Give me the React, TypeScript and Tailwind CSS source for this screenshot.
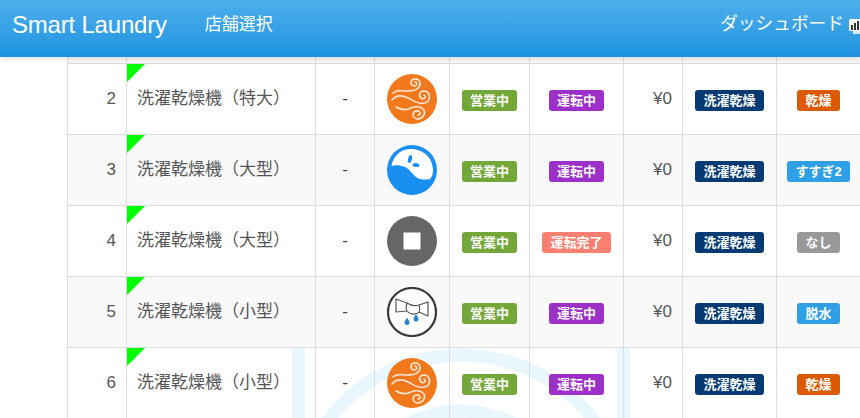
const FONT = "font-['Liberation_Sans','Noto_Sans_CJK_JP',sans-serif]";

function Wind() {
  return (
    <svg width="50" height="50" viewBox="0 0 50 50" className="block mx-auto">
      <circle cx="25" cy="25" r="25" fill="#f2781c" />
      <g fill="none" stroke="#fbe6d2" strokeWidth="1.6" strokeLinecap="round">
        <path d="M6 19C10 15 14 17 18 17C24 17 29 17 32 13C35 9 32 4 27 5C23 6 23 11 27 12C30 12 31 9 28 8" />
        <path d="M5 26C9 21 15 21 21 24C26 26 31 31 38 29C44 27 44 19 38 17C33 16 31 21 34 24C37 26 40 23 37 21" />
        <path d="M9 33C14 36 20 36 24 34C28 32 34 32 37 36C39 41 35 45 30 45C25 44 25 38 29 37C33 36 35 41 31 41" />
      </g>
    </svg>
  );
}

function Rinse() {
  return (
    <svg width="50" height="50" viewBox="0 0 50 50" className="block mx-auto">
      <circle cx="25" cy="25" r="25" fill="#1a8ff2" />
      <path d="M4.5 21C6 12 12 5 22 4C36 3 46 13 46 25C46 29 45 32 43 34C38 35 33 35 29 32C25 29 23 24 18 22C13 20 8 20 4.5 21Z" fill="#fff" />
      <ellipse cx="23" cy="14" rx="2" ry="4" fill="#1a8ff2" transform="rotate(15 23 14)" />
      <ellipse cx="29" cy="20" rx="3.5" ry="2" fill="#1a8ff2" transform="rotate(10 29 20)" />
    </svg>
  );
}

function Stop() {
  return (
    <svg width="50" height="50" viewBox="0 0 50 50" className="block mx-auto">
      <circle cx="25" cy="25" r="25" fill="#666" />
      <rect x="16.5" y="16.5" width="17" height="17" fill="#fff" />
    </svg>
  );
}

function Spin() {
  return (
    <svg width="50" height="50" viewBox="0 0 50 50" className="block mx-auto">
      <circle cx="25" cy="25" r="24" fill="#fff" stroke="#3a3a3a" strokeWidth="2.2" />
      <g fill="none" stroke="#555" strokeWidth="1.2" strokeLinejoin="round">
        <path d="M20 16L9 12L9 25L20 24" />
        <path d="M20 16C24 19 28 19 32 18C33 22 33 25 31 26C27 28 22 27 20 24C19 22 19 19 20 16Z" />
        <path d="M32 18L41 15L41 29L32 25" />
      </g>
      <path d="M20 30.5C18.5 33 17.5 34 17.5 35.5A2.5 2.5 0 0 0 22.5 35.5C22.5 34 21.5 33 20 30.5Z" fill="#2a86d0" />
      <path d="M29 27C27.5 29.500 26.500 30.500 26.500 32A2.500 2.500 0 0 0 31.500 32C31.500 30.500 30.500 29.500 29 27Z" fill="#2a86d0" />
    </svg>
  );
}

function Badge({ color, children }: { color: string; children: string }) {
  return (
    <span className={`inline-block h-[21px] rounded-[3px] px-2 text-[13px] font-bold leading-[21px] text-white align-middle whitespace-nowrap ${color}`}>
      {children}
    </span>
  );
}

const rows = [
  { n: 2, name: "洗濯乾燥機（特大）", icon: <Wind />, s: "運転中", sc: "bg-[#9c30c9]", m: "乾燥", mc: "bg-[#dc5a03]" },
  { n: 3, name: "洗濯乾燥機（大型）", icon: <Rinse />, s: "運転中", sc: "bg-[#9c30c9]", m: "すすぎ2", mc: "bg-[#2f9fe6]" },
  { n: 4, name: "洗濯乾燥機（大型）", icon: <Stop />, s: "運転完了", sc: "bg-[#fb8072]", m: "なし", mc: "bg-[#999999]" },
  { n: 5, name: "洗濯乾燥機（小型）", icon: <Spin />, s: "運転中", sc: "bg-[#9c30c9]", m: "脱水", mc: "bg-[#2f9fe6]" },
  { n: 6, name: "洗濯乾燥機（小型）", icon: <Wind />, s: "運転中", sc: "bg-[#9c30c9]", m: "乾燥", mc: "bg-[#dc5a03]" },
];

const cell = "border border-[#dddddd] p-0 align-middle";

export default function App() {
  return (
    <div className={`relative h-[418px] w-[860px] overflow-hidden bg-white ${FONT}`}>
      <header className="relative z-10 flex h-[57px] items-center overflow-hidden bg-gradient-to-b from-[#4cafeb] to-[#1b93e0] pb-[8px] text-white shadow-[0_2px_6px_rgba(0,0,0,0.12)]">
        <span className="ml-3 text-[24px] tracking-[-0.2px] whitespace-nowrap">Smart Laundry</span>
        <span className="ml-[38px] text-[17px]">店舗選択</span>
        <span className="ml-auto text-[17.700px] whitespace-nowrap">ダッシュボード</span>
        <svg width="11" height="15" viewBox="0 0 11 15" className="ml-[5px] mt-1 shrink-0">
          <rect x="0" y="0" width="18" height="12" rx="1.500" fill="#fff" />
          <rect x="4" y="12" width="10" height="3" fill="#d8e8f2" />
          <rect x="2" y="6" width="2" height="5" fill="#333" />
          <rect x="5" y="4" width="2" height="7" fill="#333" />
          <rect x="8" y="2" width="2" height="9" fill="#333" />
        </svg>
      </header>

      <svg width="338" height="70" viewBox="0 0 338 70" className="absolute left-[292px] top-[348px]" fill="none" stroke="#eaf6fd">
        <path d="M6.500 0V70M331.500 0V70" strokeWidth="13" />
        <circle cx="169" cy="175" r="168" strokeWidth="13" />
        <circle cx="169" cy="175" r="112" strokeWidth="13" />
      </svg>

      <div className="relative ml-[67px]">
        <table className="w-[830px] table-fixed border-collapse text-[17px] text-[#555555]">
          <colgroup>
            <col className="w-[59px]" />
            <col className="w-[189px]" />
            <col className="w-[59px]" />
            <col className="w-[75px]" />
            <col className="w-[80px]" />
            <col className="w-[94px]" />
            <col className="w-[59px]" />
            <col className="w-[94px]" />
            <col className="w-[121px]" />
          </colgroup>
          <tbody>
            <tr className="h-[6px] bg-[#f9f9f9]">
              {Array.from({ length: 9 }).map((_, i) => (
                <td key={i} className="border-x border-b border-[#dddddd] p-0 text-[0px] leading-[0]" />
              ))}
            </tr>
            {rows.map((r, i) => (
              <tr key={r.n} className={`h-[71px] ${i % 2 === 1 ? "bg-[#f9f9f9]" : ""}`}>
                <td className={`${cell} pr-[10px] text-right`}>{r.n}</td>
                <td className={`${cell} relative pl-[10px] whitespace-nowrap`}>
                  <span className="absolute left-0 top-0 h-0 w-0 border-r-[18px] border-t-[18px] border-r-transparent border-t-[#00ff00]" />
                  {r.name}
                </td>
                <td className={`${cell} text-center text-[#444444]`}>-</td>
                <td className={cell}>{r.icon}</td>
                <td className={`${cell} pt-[3px] text-center`}>
                  <Badge color="bg-[#74a73a]">営業中</Badge>
                </td>
                <td className={`${cell} pt-[3px] text-center`}>
                  <Badge color={r.sc}>{r.s}</Badge>
                </td>
                <td className={`${cell} pr-[10px] text-right`}>¥0</td>
                <td className={`${cell} pt-[3px] text-center`}>
                  <Badge color="bg-[#053a72]">洗濯乾燥</Badge>
                </td>
                <td className={`${cell} pt-[3px] pr-[37px] text-center`}>
                  <Badge color={r.mc}>{r.m}</Badge>
                </td>
              </tr>
            ))}
          </tbody>
        </table>
      </div>
    </div>
  );
}
